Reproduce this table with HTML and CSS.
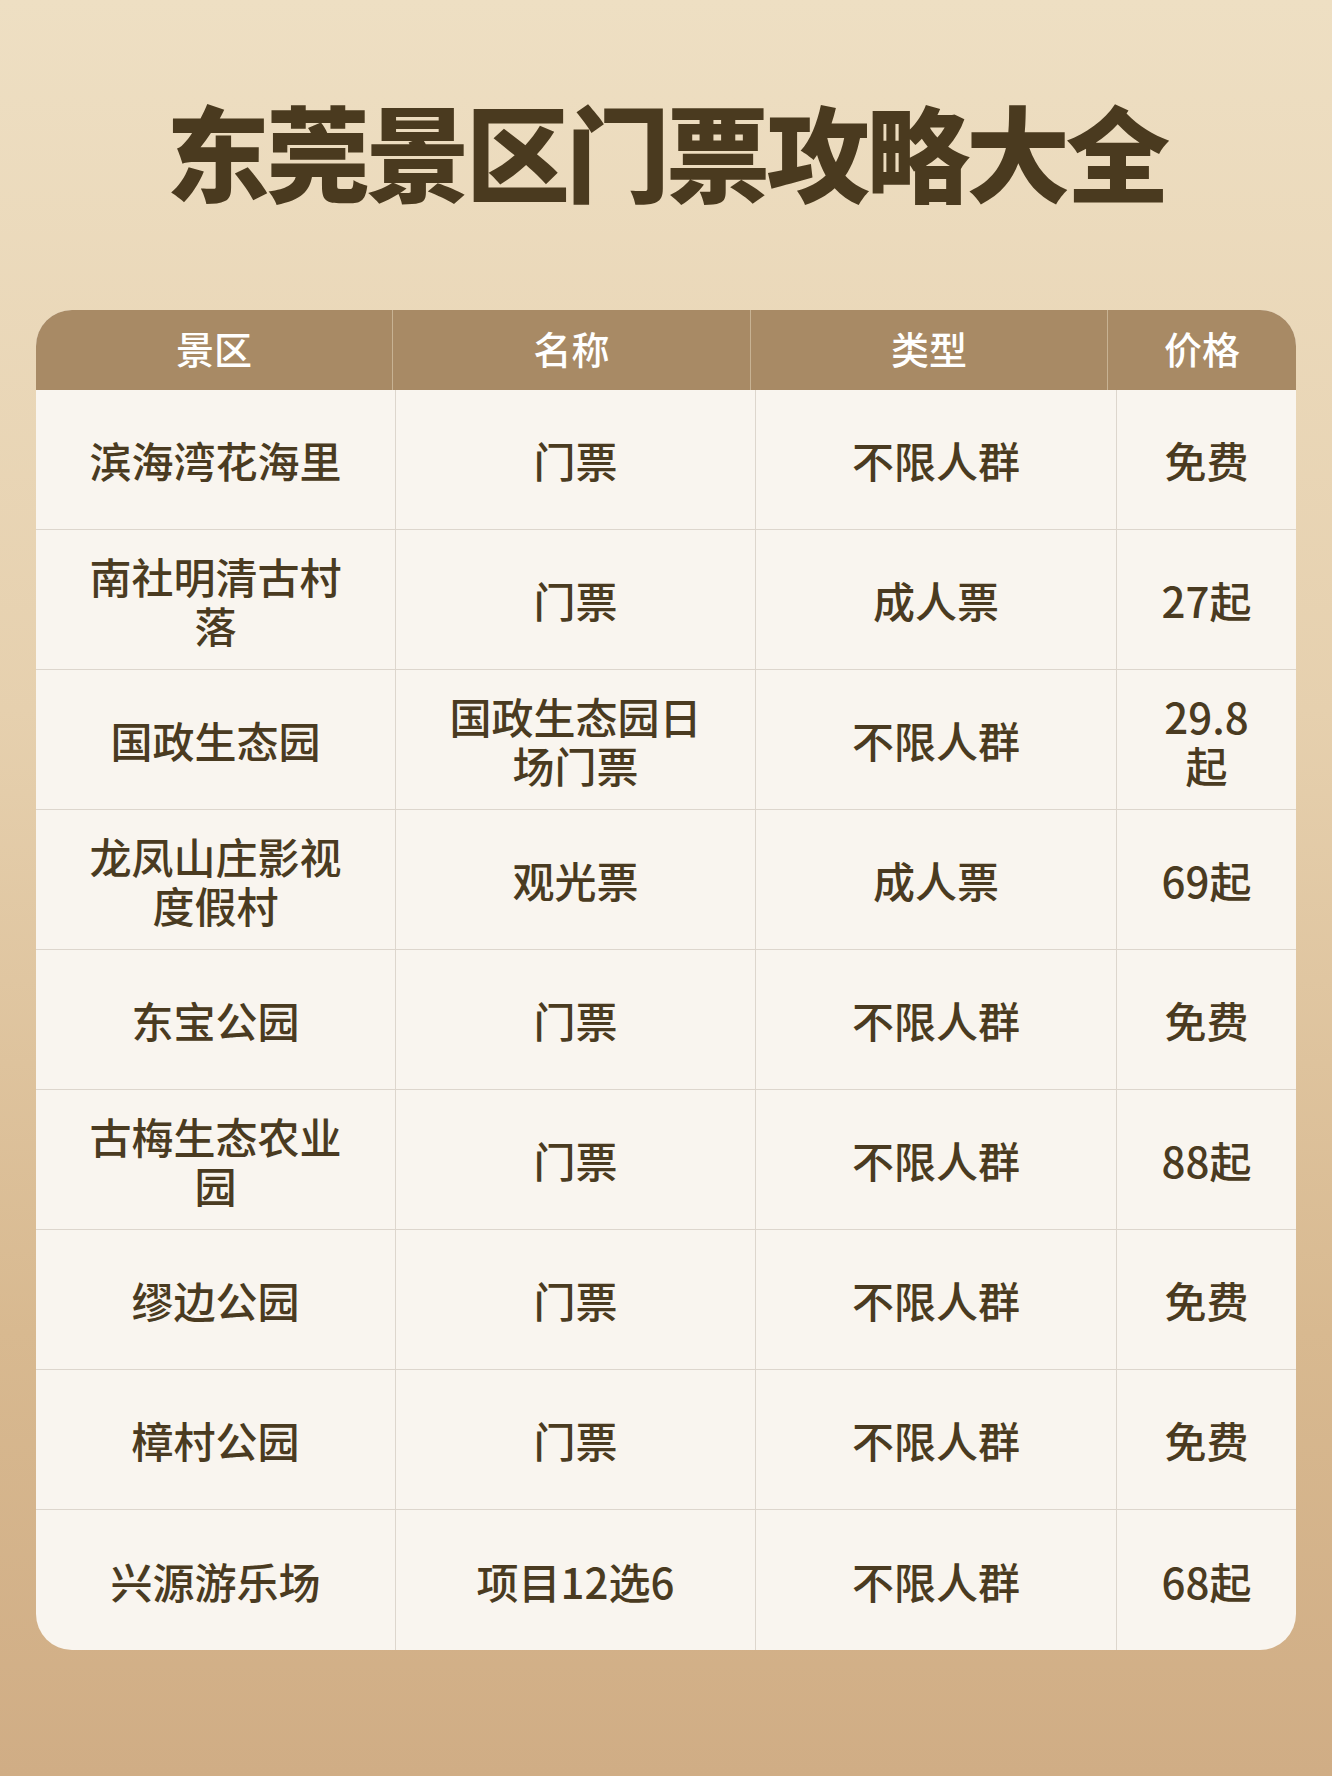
FILE: index.html
```html
<!DOCTYPE html>
<html lang="zh-CN">
<head>
<meta charset="utf-8">
<title>东莞景区门票攻略大全</title>
<link rel="stylesheet" href="styles.css">
</head>
<body>
<div class="page">
  <h1 class="title">东莞景区门票攻略大全</h1>
  <div class="table">
    <div class="thead">
      <div class="th">景区</div>
      <div class="th">名称</div>
      <div class="th">类型</div>
      <div class="th">价格</div>
    </div>
    <div class="tbody">
      <div class="td">滨海湾花海里</div><div class="td">门票</div><div class="td">不限人群</div><div class="td">免费</div>
      <div class="td">南社明清古村落</div><div class="td">门票</div><div class="td">成人票</div><div class="td">27起</div>
      <div class="td">国政生态园</div><div class="td">国政生态园日场门票</div><div class="td">不限人群</div><div class="td">29.8起</div>
      <div class="td">龙凤山庄影视度假村</div><div class="td">观光票</div><div class="td">成人票</div><div class="td">69起</div>
      <div class="td">东宝公园</div><div class="td">门票</div><div class="td">不限人群</div><div class="td">免费</div>
      <div class="td">古梅生态农业园</div><div class="td">门票</div><div class="td">不限人群</div><div class="td">88起</div>
      <div class="td">缪边公园</div><div class="td">门票</div><div class="td">不限人群</div><div class="td">免费</div>
      <div class="td">樟村公园</div><div class="td">门票</div><div class="td">不限人群</div><div class="td">免费</div>
      <div class="td last">兴源游乐场</div><div class="td last">项目12选6</div><div class="td last">不限人群</div><div class="td last">68起</div>
    </div>
  </div>
</div>
</body>
</html>
```

FILE: styles.css
```css
html, body {
  margin: 0;
  padding: 0;
}
body {
  width: 1332px;
  min-height: 1776px;
  background: linear-gradient(180deg, #eedfc3 0%, #e6d0ae 40%, #d8b990 75%, #d0ad85 100%);
  font-family: "Noto Sans CJK SC", "Noto Sans", sans-serif;
  color: #4a3b21;
}
.page {
  padding-top: 98px;
  display: flex;
  flex-direction: column;
  align-items: center;
}
.title {
  margin: 0;
  font-size: 104px;
  line-height: 104px;
  font-weight: 900;
  letter-spacing: -4px;
  color: #4a3a1f;
  text-align: center;
}
.table {
  margin-top: 108px;
  width: 1260px;
  border-radius: 36px;
  overflow: hidden;
  background: #f9f5ef;
}
.thead {
  display: grid;
  grid-template-columns: 356px 358px 357px 189px;
  height: 80px;
  background: #a88a65;
}
.th {
  display: flex;
  align-items: center;
  justify-content: center;
  padding-bottom: 6px;
  color: #ffffff;
  font-size: 38px;
  font-weight: 500;
  border-left: 1px solid #c7b293;
}
.th:first-child {
  border-left: none;
}
.tbody {
  display: grid;
  grid-template-columns: 359px 360px 361px 180px;
  grid-auto-rows: 140px;
}
.td {
  display: flex;
  align-items: center;
  justify-content: center;
  text-align: center;
  padding: 0 38px;
  font-size: 42px;
  line-height: 49px;
  font-weight: 500;
  border-left: 1px solid #ddd6cd;
  border-bottom: 1px solid #ddd6cd;
  box-sizing: border-box;
}
.td:nth-child(4n+1) {
  border-left: none;
}
.td:nth-child(4n) {
  padding: 0 30px;
}
.td.last {
  border-bottom: none;
}
```
